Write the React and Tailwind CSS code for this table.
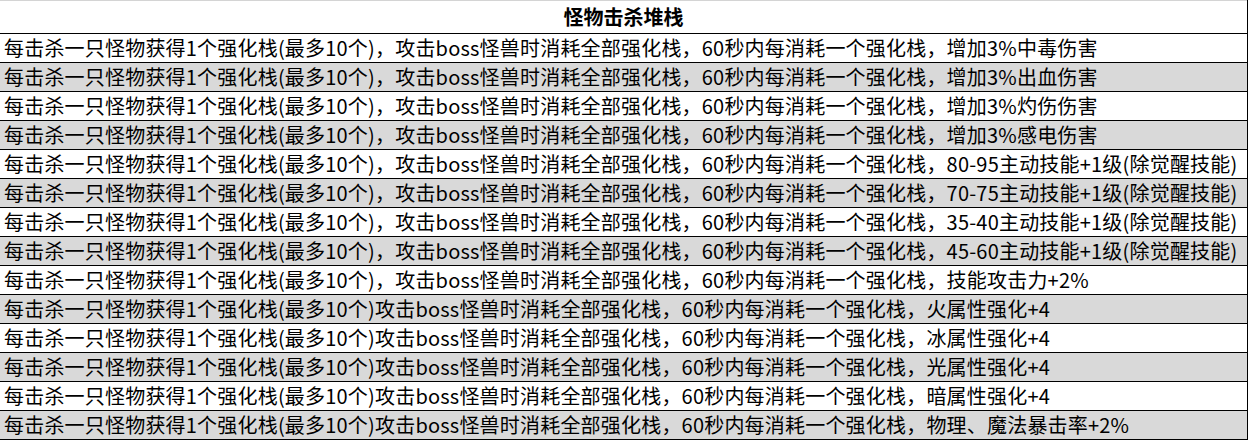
const rows = [
  "每击杀一只怪物获得1个强化栈(最多10个)，攻击boss怪兽时消耗全部强化栈，60秒内每消耗一个强化栈，增加3%中毒伤害",
  "每击杀一只怪物获得1个强化栈(最多10个)，攻击boss怪兽时消耗全部强化栈，60秒内每消耗一个强化栈，增加3%出血伤害",
  "每击杀一只怪物获得1个强化栈(最多10个)，攻击boss怪兽时消耗全部强化栈，60秒内每消耗一个强化栈，增加3%灼伤伤害",
  "每击杀一只怪物获得1个强化栈(最多10个)，攻击boss怪兽时消耗全部强化栈，60秒内每消耗一个强化栈，增加3%感电伤害",
  "每击杀一只怪物获得1个强化栈(最多10个)，攻击boss怪兽时消耗全部强化栈，60秒内每消耗一个强化栈，80-95主动技能+1级(除觉醒技能)",
  "每击杀一只怪物获得1个强化栈(最多10个)，攻击boss怪兽时消耗全部强化栈，60秒内每消耗一个强化栈，70-75主动技能+1级(除觉醒技能)",
  "每击杀一只怪物获得1个强化栈(最多10个)，攻击boss怪兽时消耗全部强化栈，60秒内每消耗一个强化栈，35-40主动技能+1级(除觉醒技能)",
  "每击杀一只怪物获得1个强化栈(最多10个)，攻击boss怪兽时消耗全部强化栈，60秒内每消耗一个强化栈，45-60主动技能+1级(除觉醒技能)",
  "每击杀一只怪物获得1个强化栈(最多10个)，攻击boss怪兽时消耗全部强化栈，60秒内每消耗一个强化栈，技能攻击力+2%",
  "每击杀一只怪物获得1个强化栈(最多10个)攻击boss怪兽时消耗全部强化栈，60秒内每消耗一个强化栈，火属性强化+4",
  "每击杀一只怪物获得1个强化栈(最多10个)攻击boss怪兽时消耗全部强化栈，60秒内每消耗一个强化栈，冰属性强化+4",
  "每击杀一只怪物获得1个强化栈(最多10个)攻击boss怪兽时消耗全部强化栈，60秒内每消耗一个强化栈，光属性强化+4",
  "每击杀一只怪物获得1个强化栈(最多10个)攻击boss怪兽时消耗全部强化栈，60秒内每消耗一个强化栈，暗属性强化+4",
  "每击杀一只怪物获得1个强化栈(最多10个)攻击boss怪兽时消耗全部强化栈，60秒内每消耗一个强化栈，物理、魔法暴击率+2%",
];

export default function App() {
  return (
    <div className="w-[1249px] h-[441px] bg-white font-['Noto_Sans_CJK_SC','Noto_Sans',sans-serif] text-black">
      <div className="w-[1248px] border-r border-black">
        <div className="h-[34px] flex items-center justify-center border-t border-[#d4d4d4] border-b border-b-black text-[20px] font-bold">
          怪物击杀堆栈
        </div>
        {rows.map((text, i) => (
          <div
            key={i}
            className={
              "h-[29px] flex items-center pl-[4px] border-b border-black text-[20px] tracking-[0.2px] whitespace-nowrap overflow-hidden " +
              (i % 2 === 1 ? "bg-[#d9d9d9]" : "bg-white")
            }
          >
            {text}
          </div>
        ))}
      </div>
    </div>
  );
}
